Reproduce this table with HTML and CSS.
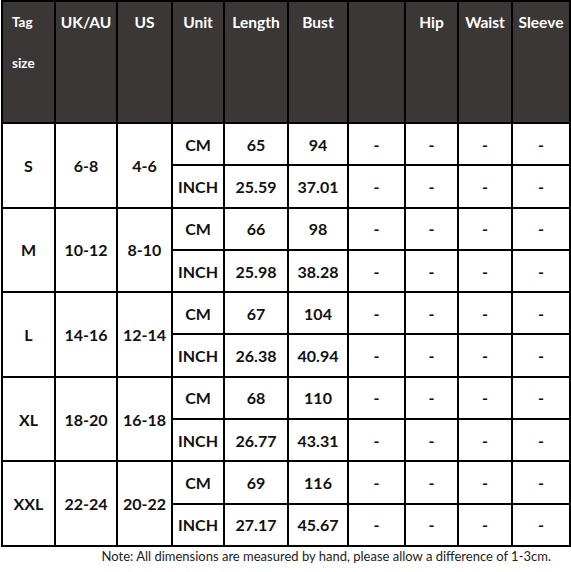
FILE: index.html
```html
<!DOCTYPE html>
<html>
<head>
<meta charset="utf-8">
<link rel="stylesheet" href="styles.css">
</head>
<body>
<div class="chart">
<table class="size-table">
  <colgroup>
    <col class="c1"><col class="c2"><col class="c3"><col class="c4"><col class="c5">
    <col class="c6"><col class="c7"><col class="c8"><col class="c9"><col class="c10">
  </colgroup>
  <thead>
    <tr class="head-row">
      <th class="tag">Tag<br>size</th>
      <th>UK/AU</th>
      <th>US</th>
      <th>Unit</th>
      <th>Length</th>
      <th>Bust</th>
      <th></th>
      <th>Hip</th>
      <th>Waist</th>
      <th>Sleeve</th>
    </tr>
  </thead>
  <tbody>
    <tr><td rowspan="2">S</td><td rowspan="2">6-8</td><td rowspan="2">4-6</td><td>CM</td><td>65</td><td>94</td><td>-</td><td>-</td><td>-</td><td>-</td></tr>
    <tr><td>INCH</td><td>25.59</td><td>37.01</td><td>-</td><td>-</td><td>-</td><td>-</td></tr>
    <tr><td rowspan="2">M</td><td rowspan="2">10-12</td><td rowspan="2">8-10</td><td>CM</td><td>66</td><td>98</td><td>-</td><td>-</td><td>-</td><td>-</td></tr>
    <tr><td>INCH</td><td>25.98</td><td>38.28</td><td>-</td><td>-</td><td>-</td><td>-</td></tr>
    <tr><td rowspan="2">L</td><td rowspan="2">14-16</td><td rowspan="2">12-14</td><td>CM</td><td>67</td><td>104</td><td>-</td><td>-</td><td>-</td><td>-</td></tr>
    <tr><td>INCH</td><td>26.38</td><td>40.94</td><td>-</td><td>-</td><td>-</td><td>-</td></tr>
    <tr><td rowspan="2">XL</td><td rowspan="2">18-20</td><td rowspan="2">16-18</td><td>CM</td><td>68</td><td>110</td><td>-</td><td>-</td><td>-</td><td>-</td></tr>
    <tr><td>INCH</td><td>26.77</td><td>43.31</td><td>-</td><td>-</td><td>-</td><td>-</td></tr>
    <tr><td rowspan="2">XXL</td><td rowspan="2">22-24</td><td rowspan="2">20-22</td><td>CM</td><td>69</td><td>116</td><td>-</td><td>-</td><td>-</td><td>-</td></tr>
    <tr><td>INCH</td><td>27.17</td><td>45.67</td><td>-</td><td>-</td><td>-</td><td>-</td></tr>
  </tbody>
</table>
<p class="note">Note: All dimensions are measured by hand, please allow a difference of 1-3cm.</p>
</div>
</body>
</html>
```

FILE: styles.css
```css
html, body {
  margin: 0;
  padding: 0;
  background: #ffffff;
}
body {
  font-family: Lato, "Open Sans", Arial, sans-serif;
  width: 571px;
  height: 572px;
  overflow: hidden;
}
.chart {
  padding: 0 0 0 1px;
}
.size-table {
  border-collapse: collapse;
  table-layout: fixed;
  width: 568px;
}
.c1 { width: 53px; }
.c2 { width: 62px; }
.c3 { width: 55px; }
.c4 { width: 52px; }
.c5 { width: 64px; }
.c6 { width: 60px; }
.c7 { width: 57px; }
.c8 { width: 53px; }
.c9 { width: 54px; }
.c10 { width: 58px; }

.size-table th,
.size-table td {
  border: 2px solid #000;
  padding: 0;
  text-align: center;
  font-weight: 700;
}
.size-table th {
  background: #3b3737;
  color: #ffffff;
  font-size: 15.5px;
  line-height: 41px;
  vertical-align: top;
  height: 120px;
}
.size-table th.tag {
  text-align: left;
  padding-left: 9px;
  font-size: 13.5px;
}
.size-table td {
  height: 40.3px;
  font-size: 16px;
  color: #111;
  vertical-align: middle;
}
.note {
  margin: 0;
  padding-right: 20px;
  text-align: right;
  font-size: 13px;
  color: #222;
  line-height: 18px;
}
```
